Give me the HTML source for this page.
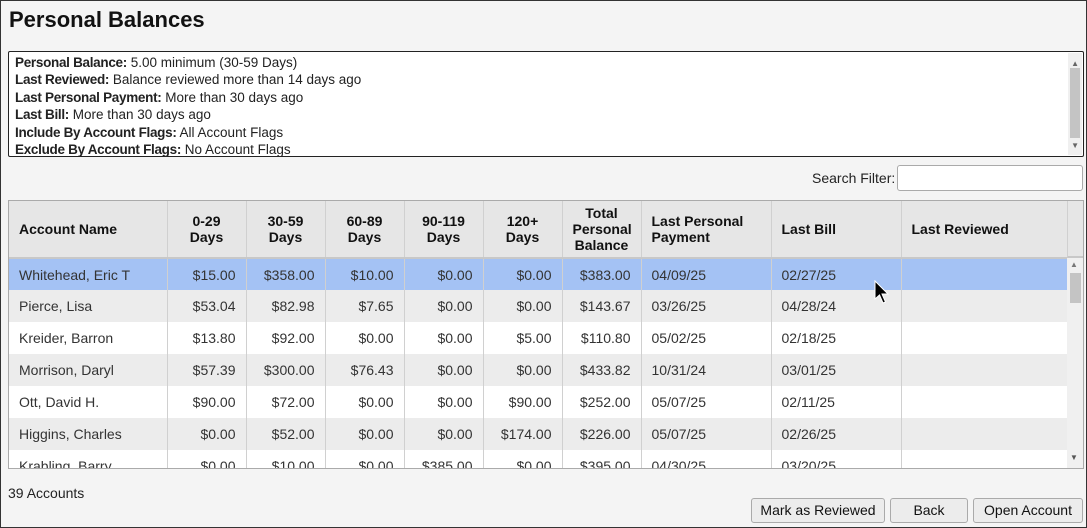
<!DOCTYPE html>
<html><head><style>
*{box-sizing:border-box;margin:0;padding:0}
body{width:1087px;height:528px;background:#f4f4f4;font-family:"Liberation Sans",sans-serif;font-size:14px;color:#222;position:relative;overflow:hidden;border:1px solid #333}
.abs{position:absolute}
h1{position:absolute;left:8px;top:6px;font-size:22px;font-weight:bold;color:#111}
.info{left:7px;top:50px;width:1076px;height:106px;background:#fff;border:1px solid #222;border-radius:2px;padding:2px 6px;line-height:17.4px;font-size:13.5px;overflow:hidden}
.info b{font-weight:bold;letter-spacing:-0.3px}
.sb{background:#f0f0f0;}
.thumb{background:#c4c4c4}
table{border-collapse:collapse;table-layout:fixed}
td,th{height:32px;padding:0 10px;white-space:nowrap;overflow:hidden;border-right:1px solid #d0d0d0;font-size:14px}
th{height:57px;background:#e6e6e6;font-weight:bold;line-height:16px;border-bottom:2px solid #c8c8c8;color:#111}
td{color:#333}
td.n{text-align:right}
tr.s td{background:#a4c2f4}
tr.g td{background:#ececec}
tr.w td{background:#fff}
.btn{position:absolute;top:497px;height:25px;border:1px solid #aaa;border-radius:3px;background:#ececec;text-align:center;line-height:23px;font-size:14px;color:#111}
</style></head><body>
<h1>Personal Balances</h1>
<div class="abs info">
<div><b>Personal Balance:</b> 5.00 minimum (30-59 Days)</div>
<div><b>Last Reviewed:</b> Balance reviewed more than 14 days ago</div>
<div><b>Last Personal Payment:</b> More than 30 days ago</div>
<div><b>Last Bill:</b> More than 30 days ago</div>
<div><b>Include By Account Flags:</b> All Account Flags</div>
<div><b>Exclude By Account Flags:</b> No Account Flags</div>
<div class="abs sb" style="right:1px;top:1px;width:14px;height:102px"></div>
<div class="abs thumb" style="right:3px;top:16px;width:10px;height:70px"></div>
<div class="abs" style="right:4px;top:3px;font-size:8px;color:#666">▲</div>
<div class="abs" style="right:4px;bottom:2px;font-size:8px;color:#666">▼</div>
</div>
<div class="abs" style="left:811px;top:169px;font-size:14px">Search Filter:</div>
<div class="abs" style="left:896px;top:164px;width:186px;height:26px;background:#fff;border:1px solid #aaa;border-radius:3px"></div>
<div class="abs" style="left:7px;top:199px;width:1076px;height:269px;border:1px solid #aaa;background:#fff;overflow:hidden">
<table style="width:1058px">
<colgroup><col style="width:158px"><col style="width:79px"><col style="width:79px"><col style="width:79px"><col style="width:79px"><col style="width:79px"><col style="width:79px"><col style="width:130px"><col style="width:130px"><col style="width:166px"></colgroup>
<tr><th style="text-align:left">Account Name</th><th>0-29<br>Days</th><th>30-59<br>Days</th><th>60-89<br>Days</th><th>90-119<br>Days</th><th>120+<br>Days</th><th>Total<br>Personal<br>Balance</th><th style="text-align:left">Last Personal<br>Payment</th><th style="text-align:left">Last Bill</th><th style="text-align:left">Last Reviewed</th></tr>
<tr class="s"><td>Whitehead, Eric T</td><td class="n">$15.00</td><td class="n">$358.00</td><td class="n">$10.00</td><td class="n">$0.00</td><td class="n">$0.00</td><td class="n">$383.00</td><td>04/09/25</td><td>02/27/25</td><td></td></tr>
<tr class="g"><td>Pierce, Lisa</td><td class="n">$53.04</td><td class="n">$82.98</td><td class="n">$7.65</td><td class="n">$0.00</td><td class="n">$0.00</td><td class="n">$143.67</td><td>03/26/25</td><td>04/28/24</td><td></td></tr>
<tr class="w"><td>Kreider, Barron</td><td class="n">$13.80</td><td class="n">$92.00</td><td class="n">$0.00</td><td class="n">$0.00</td><td class="n">$5.00</td><td class="n">$110.80</td><td>05/02/25</td><td>02/18/25</td><td></td></tr>
<tr class="g"><td>Morrison, Daryl</td><td class="n">$57.39</td><td class="n">$300.00</td><td class="n">$76.43</td><td class="n">$0.00</td><td class="n">$0.00</td><td class="n">$433.82</td><td>10/31/24</td><td>03/01/25</td><td></td></tr>
<tr class="w"><td>Ott, David H.</td><td class="n">$90.00</td><td class="n">$72.00</td><td class="n">$0.00</td><td class="n">$0.00</td><td class="n">$90.00</td><td class="n">$252.00</td><td>05/07/25</td><td>02/11/25</td><td></td></tr>
<tr class="g"><td>Higgins, Charles</td><td class="n">$0.00</td><td class="n">$52.00</td><td class="n">$0.00</td><td class="n">$0.00</td><td class="n">$174.00</td><td class="n">$226.00</td><td>05/07/25</td><td>02/26/25</td><td></td></tr>
<tr class="w"><td>Krabling, Barry</td><td class="n">$0.00</td><td class="n">$10.00</td><td class="n">$0.00</td><td class="n">$385.00</td><td class="n">$0.00</td><td class="n">$395.00</td><td>04/30/25</td><td>03/20/25</td><td></td></tr>
</table>
<div class="abs" style="left:1058px;top:0;width:17px;height:57px;background:#e6e6e6;border-bottom:2px solid #c8c8c8;border-left:1px solid #d0d0d0"></div>
<div class="abs sb" style="left:1058px;top:57px;width:17px;height:212px"></div>
<div class="abs thumb" style="left:1061px;top:72px;width:11px;height:30px"></div>
<div class="abs" style="left:1061px;top:59px;font-size:8px;color:#777">▲</div>
<div class="abs" style="left:1061px;top:252px;font-size:8px;color:#555">▼</div>
</div>
<svg class="abs" style="left:873px;top:279px" width="16" height="26" viewBox="0 0 16 26"><path d="M1 1 L1 19 L5.5 15 L9 23 L11.5 22 L8 14 L14 14 Z" fill="#000" stroke="#fff" stroke-width="1"/></svg>
<div class="abs" style="left:7px;top:484px">39 Accounts</div>
<div class="btn" style="left:750px;width:134px">Mark as Reviewed</div>
<div class="btn" style="left:889px;width:78px">Back</div>
<div class="btn" style="left:972px;width:110px">Open Account</div>
</body></html>
